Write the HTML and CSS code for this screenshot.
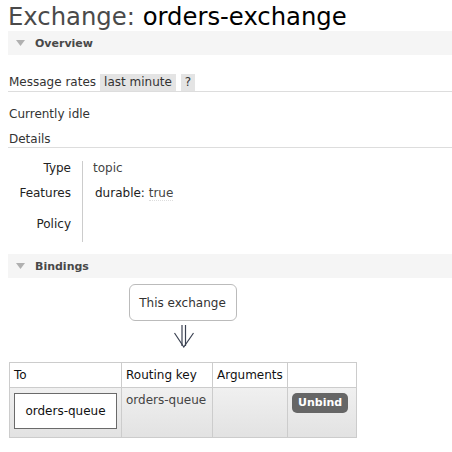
FILE: index.html
```html
<!DOCTYPE html>
<html>
<head>
<meta charset="utf-8">
<link rel="stylesheet" href="styles.css">
</head>
<body>
<h1 class="title">Exchange: <span class="title-name">orders-exchange</span></h1>

<div class="section-bar">
  <svg class="tri" width="9" height="6" viewBox="0 0 9 6"><polygon points="0,0 9,0 4.5,6" fill="#b0b0b0"/></svg>
  <span class="section-title">Overview</span>
</div>

<div class="rates-row">
  <span class="rates-label">Message rates</span>
  <span class="pill pill-first">last minute</span>
  <span class="pill pill-help">?</span>
</div>

<p class="idle">Currently idle</p>

<div class="details-head">Details</div>

<div class="details">
  <div class="details-labels">
    <div class="dl dl-1">Type</div>
    <div class="dl dl-2">Features</div>
    <div class="dl dl-3">Policy</div>
  </div>
  <div class="details-values">
    <div class="dv dv-1">topic</div>
    <div class="dv dv-2"><span class="feat">durable: <abbr class="feat-val">true</abbr></span></div>
    <div class="dv dv-3"></div>
  </div>
</div>

<div class="section-bar section-bar-bindings">
  <svg class="tri" width="9" height="6" viewBox="0 0 9 6"><polygon points="0,0 9,0 4.5,6" fill="#b0b0b0"/></svg>
  <span class="section-title">Bindings</span>
</div>

<div class="diagram">
  <div class="this-ex">This exchange</div>
  <svg class="arrow" width="20" height="23" viewBox="0 0 20 23">
    <line x1="8" y1="0" x2="8" y2="21" stroke="#3b4252" stroke-width="1.2"/>
    <line x1="11.5" y1="0" x2="11.5" y2="21" stroke="#3b4252" stroke-width="1.2"/>
    <polyline points="0.5,8 9.8,22 19.5,8" fill="none" stroke="#3b4252" stroke-width="1.2"/>
  </svg>
</div>

<table class="bindings">
  <colgroup>
    <col class="c-to"><col class="c-key"><col class="c-args"><col class="c-act">
  </colgroup>
  <thead>
    <tr><th>To</th><th>Routing key</th><th>Arguments</th><th></th></tr>
  </thead>
  <tbody>
    <tr>
      <td><div class="queue-box">orders-queue</div></td>
      <td class="key">orders-queue</td>
      <td></td>
      <td><span class="unbind">Unbind</span></td>
    </tr>
  </tbody>
</table>
</body>
</html>
```

FILE: styles.css
```css
html, body {
  background: #fff;
}
body {
  margin: 0 0 0 8px;
  font-family: "DejaVu Sans", Verdana, sans-serif;
  font-size: 12px;
  color: #333;
}
.title {
  margin: 0;
  padding-top: 2px;
  font-size: 24.3px;
  line-height: 29px;
  font-weight: normal;
  color: #4a4a4a;
  white-space: nowrap;
}
.title-name {
  color: #000;
}
.section-bar {
  height: 24px;
  background: #f5f5f5;
  display: flex;
  align-items: center;
  padding-left: 8px;
}
.tri {
  display: block;
  margin-right: 10px;
}
.section-title {
  font-weight: bold;
  font-size: 11px;
  color: #484848;
}
.rates-row {
  margin-top: 19px;
  display: flex;
  align-items: flex-end;
  border-bottom: 1px solid #ddd;
  line-height: 17px;
}
.rates-label {
  padding-left: 1px;
  margin-right: 4px;
}
.pill {
  background: #e4e4e4;
  padding: 0 4px;
  height: 17px;
}
.pill-first {
  margin-right: 5px;
}
.idle {
  margin: 15px 0 0 1px;
  line-height: 14px;
}
.details-head {
  margin-top: 11px;
  padding-left: 1px;
  line-height: 14px;
  padding-bottom: 1px;
  border-bottom: 1px solid #ddd;
}
.details {
  margin-top: 13px;
  display: flex;
  height: 81px;
}
.details-labels {
  width: 63px;
  padding-right: 11px;
  border-right: 1px solid #ccc;
  text-align: right;
  color: #222;
}
.details-values {
  padding-left: 10px;
}
.dl, .dv {
  line-height: 14px;
}
.dl-2, .dv-2 {
  margin-top: 11px;
}
.dl-3, .dv-3 {
  margin-top: 17px;
}
.dv-1 {
  color: #444;
}
.feat {
  padding-left: 2px;
  color: #222;
}
.feat-val {
  text-decoration: none;
  border-bottom: 1px dotted #ddd;
  color: #444;
}
.section-bar-bindings {
  margin-top: 12px;
}
.diagram {
  width: 347px;
  margin-left: 1px;
  display: flex;
  flex-direction: column;
  align-items: center;
}
.this-ex {
  margin-top: 6px;
  width: 106px;
  height: 35px;
  border: 1px solid #bbb;
  border-radius: 6px;
  display: flex;
  align-items: center;
  justify-content: center;
  color: #333;
}
.arrow {
  display: block;
  margin-top: 4px;
  margin-left: 2px;
}
.bindings {
  margin-top: 14px;
  margin-left: 1px;
  border-collapse: collapse;
  table-layout: fixed;
  width: 347px;
}
.c-to { width: 112px; }
.c-key { width: 91px; }
.c-args { width: 75px; }
.c-act { width: 69px; }
.bindings th, .bindings td {
  border: 1px solid #ccc;
  padding: 0 4px;
}
.bindings th {
  height: 24px;
  text-align: left;
  font-weight: normal;
  color: #111;
  background: #fff;
  vertical-align: middle;
}
.bindings tbody tr {
  background: linear-gradient(#f0f0f0, #e2e2e2);
}
.bindings td {
  vertical-align: top;
  padding-top: 5px;
  padding-bottom: 8px;
}
.queue-box {
  width: 101px;
  height: 34px;
  border: 1px solid #6a6a6a;
  background: #fff;
  display: flex;
  align-items: center;
  justify-content: center;
  color: #111;
}
.key {
  color: #444;
  line-height: 14px;
}
.unbind {
  display: inline-block;
  background: #666;
  color: #fff;
  font-weight: bold;
  font-size: 11px;
  line-height: 20px;
  height: 20px;
  padding: 0 6px;
  border-radius: 5px;
}
```
